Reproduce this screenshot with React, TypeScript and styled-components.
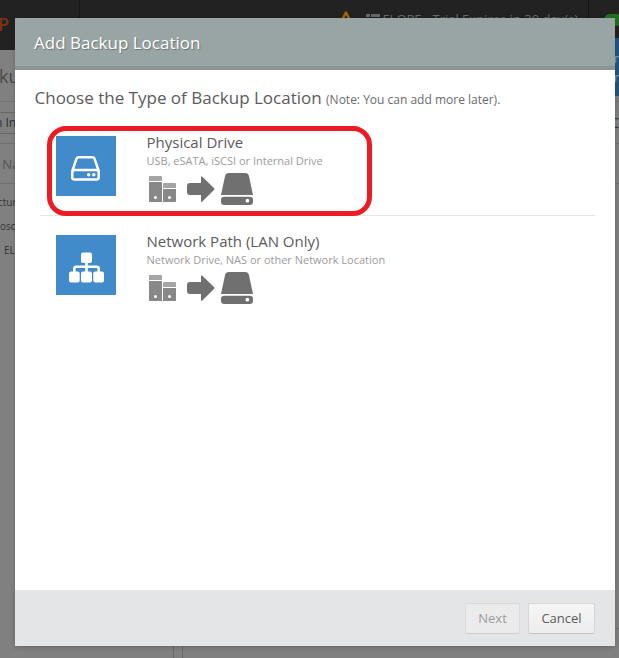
import React from 'react';
import styled, { createGlobalStyle } from 'styled-components';

const GlobalStyle = createGlobalStyle`
  * { box-sizing: border-box; }
  body { margin: 0; overflow: hidden; background: #808080; font-family: "Open Sans", sans-serif; color: #555; }
`;

const Screen = styled.div`
  position: relative;
  width: 619px;
  height: 658px;
  overflow: hidden;
  display: flex;
  flex-direction: column;
  background: #808080;
  white-space: nowrap;
`;

const TopBar = styled.header`
  display: grid;
  grid-template-columns: 80px 509px 30px;
  height: 50px;
  flex: none;
  background: #222;
`;
const BarCell = styled.div<{ $justify?: string }>`
  display: flex;
  justify-content: ${p => p.$justify ?? 'flex-start'};
  border-right: 1px solid #151515;
  overflow: hidden;
`;
const Brand = styled.span`
  margin-left: -2px;
  padding-top: 12px;
  font-size: 18px;
  font-weight: 600;
  line-height: 24px;
  color: #80310f;
`;
const Trial = styled.span`
  display: flex;
  align-items: flex-start;
  padding: 11px 10px 0 0;
  font-size: 13px;
  line-height: 17px;
  color: #686868;
  svg { flex: none; }
`;
const TrialText = styled.span`
  margin-left: 2px;
`;
const Status = styled.span`
  width: 18px;
  height: 12px;
  margin: 14px 0 0 15px;
  border-radius: 6px;
  background: #237023;
`;

const PageRow = styled.div<{ $h: number; $line?: string }>`
  display: flex;
  justify-content: space-between;
  align-items: center;
  height: ${p => p.$h}px;
  flex: none;
  border-bottom: 1px solid ${p => p.$line ?? 'transparent'};
`;
const PageText = styled.span<{ $size: number; $indent?: number; $color?: string; $weight?: number }>`
  margin-left: ${p => p.$indent ?? 0}px;
  font-size: ${p => p.$size}px;
  font-weight: ${p => p.$weight ?? 400};
  color: ${p => p.$color ?? '#333'};
`;
const ToolButton = styled.div`
  display: flex;
  align-items: center;
  width: 60px;
  height: 22px;
  border: 1px solid #686868;
  border-left: 0;
`;
const Promo = styled.div`
  align-self: flex-start;
  width: 5px;
  height: 58px;
  margin-top: -12px;
  padding-top: 11px;
  overflow: hidden;
  background: #215580;
  color: #909da8;
  font-size: 12px;
  line-height: 19px;
`;
const Panes = styled.div`
  display: grid;
  grid-template-columns: 174px 9px 1fr;
  flex: 1;
`;
const Pane = styled.div`
  border-right: 1px solid #666;
`;
const DetailPane = styled.div`
  height: 361px;
  border-bottom: 1px solid #707070;
`;

const Dialog = styled.section`
  position: absolute;
  left: 15px;
  top: 18px;
  width: 600px;
  height: 628px;
  display: flex;
  flex-direction: column;
  background: #fff;
  border-radius: 1px;
  box-shadow: 0 1px 5px rgba(0, 0, 0, 0.2);
`;
const DialogHeader = styled.header`
  height: 52px;
  padding: 0 19px;
  background: #99a5a4;
  border-bottom: 4px solid #8a9695;
  color: #fff;
  font-size: 17px;
  line-height: 49px;
  text-shadow: 1px 1px 1px rgba(0, 0, 0, 0.3);
`;
const DialogBody = styled.div`
  flex: 1;
  padding: 16px 20px 0;
`;
const Heading = styled.h1`
  height: 31px;
  margin: 0 0 0 -0.5px;
  font-size: 17px;
  font-weight: 400;
  line-height: 24px;
  color: #5b5b5b;
`;
const Note = styled.small`
  font-size: 12px;
  color: #6b6b6b;
`;
const OptionList = styled.div`
  margin-left: 5px;
`;
const Option = styled.div`
  position: relative;
  display: grid;
  grid-template-columns: 60px 1fr;
  column-gap: 30.5px;
  height: 99px;
  padding: 19px 0 0 16px;
  &:not(:last-child) { border-bottom: 1px solid #e5e5e5; }
`;
const Tile = styled.div`
  display: grid;
  place-items: center;
  width: 60px;
  height: 60px;
  padding-top: 3px;
  background: #428bca;
`;
const OptionTitle = styled.div`
  margin-top: -5px;
  font-size: 15px;
  line-height: 22px;
  color: #5b5b5b;
`;
const OptionHint = styled.div`
  font-size: 11px;
  line-height: 16px;
  color: #9c9c9c;
`;
const Highlight = styled.div`
  position: absolute;
  left: 7px;
  top: 9px;
  width: 325px;
  height: 90px;
  border: 5px solid #ed1c24;
  border-radius: 19px;
`;
const FlowDrawing = styled.svg`
  display: block;
  margin: 2px 0 0 1.5px;
`;
const DialogFooter = styled.footer`
  display: flex;
  justify-content: flex-end;
  gap: 8px;
  height: 56px;
  padding: 13px 20px 0;
  background: #e4e5e7;
`;
const Button = styled.button<{ $width: number }>`
  width: ${p => p.$width}px;
  height: 31px;
  padding: 0;
  border: 1px solid #d5d5d6;
  border-bottom-color: #c5c5c5;
  border-radius: 2px;
  background: linear-gradient(#f5f5f5, #ededed);
  color: #5a5a5a;
  font: 13px/27px "Open Sans", sans-serif;
  &:disabled { color: #9c9c9c; background: #ebebec; border-color: #d9dadb; border-bottom-color: #cecfd0; }
`;

const WarningIcon = () => (
  <svg width="14" height="14" viewBox="0 0 14 14">
    <path d="M7 1.5 13 13H1Z" fill="none" stroke="#a2650c" strokeWidth="2.4" strokeLinejoin="round" />
  </svg>
);
const ListIcon = () => (
  <svg width="14" height="12" viewBox="0 0 14 12">
    <path d="M0 3h4v3H0zM5 3h9v3H5zM0 7h4v3H0zM5 7h9v3H5z" fill="#686868" />
  </svg>
);
const ListGap = styled.span`
  width: 13px;
`;

const DriveIcon = () => (
  <svg width="32" height="28" viewBox="0 0 32 28" fill="none" stroke="#fff" strokeWidth="2.5">
    <path d="M2.3 17 6.5 4.6Q7.1 3.2 8.6 3.2H22.4Q23.9 3.2 24.5 4.6L28.7 17V23.2Q28.7 25.5 26.4 25.5H4.6Q2.3 25.5 2.3 23.2V18.7Q2.3 16 5 16H26Q28.7 16 28.7 18.7" />
    <circle cx="18.7" cy="20.8" r="1.7" fill="#fff" stroke="none" />
    <circle cx="23.8" cy="20.8" r="1.7" fill="#fff" stroke="none" />
  </svg>
);
const NetworkIcon = () => (
  <svg width="36" height="32" viewBox="0 0 36 32" fill="#fff">
    <rect x="13" y="1.5" width="11" height="10.5" rx="2" />
    <rect x="1" y="20.5" width="10.7" height="11" rx="2" />
    <rect x="13" y="20.5" width="11" height="11" rx="2" />
    <rect x="25.3" y="20.5" width="10.7" height="11" rx="2" />
    <path d="M18.5 10v11M6.3 21v-3.2q0-2 2-2h20.4q2 0 2 2V21" fill="none" stroke="#fff" strokeWidth="2.6" />
  </svg>
);
const TransferDrawing = () => (
  <FlowDrawing width="107" height="36" viewBox="0 0 107 36">
    <path d="M1 5.5q0-.5.5-.5H13q1 0 1 1v4H1zM15 12.7q0-.7.7-.7H27q1 0 1 1v4H15z" fill="#a5a5a5" />
    <path d="M1 11h13v20H1.8q-.8 0-.8-.8zM15 18h13v12.2q0 .8-.8.8H15z" fill="#888" />
    <circle cx="7.5" cy="26.5" r="1.5" fill="#fff" />
    <circle cx="21.5" cy="26.5" r="1.5" fill="#fff" />
    <path d="M42 12h11V6.2q0-1.7 1.3-.5L66 17q1 1 0 2L54.3 30.5Q53 31.7 53 30v-6H42q-3 0-3-3v-6q0-3 3-3Z" fill="#707070" />
    <path d="M81 2h16q3.3 0 4 3.2L105 24H73L77 5.2Q77.7 2 81 2Z" fill="#707070" />
    <rect x="73" y="25.7" width="32" height="8.3" rx="3.3" fill="#707070" />
    <circle cx="99.4" cy="29.7" r="1.9" fill="#fff" />
  </FlowDrawing>
);

const options = [
  { title: 'Physical Drive', hint: 'USB, eSATA, iSCSI or Internal Drive', Icon: DriveIcon, marked: true },
  { title: 'Network Path (LAN Only)', hint: 'Network Drive, NAS or other Network Location', Icon: NetworkIcon, marked: false },
];

export default function App() {
  return (
    <>
      <GlobalStyle />
      <Screen>
        <TopBar>
          <BarCell><Brand>P</Brand></BarCell>
          <BarCell $justify="flex-end">
            <Trial>
              <WarningIcon /><ListGap /><ListIcon />
              <TrialText>ELOPE - Trial Expires in 30 day(s)</TrialText>
            </Trial>
          </BarCell>
          <Status />
        </TopBar>
        <PageRow $h={52} $line="#737373">
          <PageText $size={18} $indent={-1} $color="#484848">ku</PageText>
          <Promo>m<br />na</Promo>
        </PageRow>
        <PageRow $h={42} $line="#707070">
          <ToolButton><PageText $size={12} $indent={-5} $color="#292f43">n In</PageText></ToolButton>
          <PageText $size={14}>C</PageText>
        </PageRow>
        <PageRow $h={40} $line="#707070">
          <PageText $size={13} $indent={2} $color="#5f5f5f" $weight={600}>Na</PageText>
        </PageRow>
        <PageRow $h={36}><PageText $size={10} $indent={-2}>ctur</PageText></PageRow>
        <PageRow $h={12}><PageText $size={10}>osc</PageText></PageRow>
        <PageRow $h={36}><PageText $size={10} $indent={4}>EL</PageText></PageRow>
        <Panes><Pane /><Pane /><DetailPane /></Panes>
        <Dialog>
          <DialogHeader>Add Backup Location</DialogHeader>
          <DialogBody>
            <Heading>Choose the Type of Backup Location <Note>(Note: You can add more later).</Note></Heading>
            <OptionList>
              {options.map(({ title, hint, Icon, marked }) => (
                <Option key={title}>
                  <Tile><Icon /></Tile>
                  <div>
                    <OptionTitle>{title}</OptionTitle>
                    <OptionHint>{hint}</OptionHint>
                    <TransferDrawing />
                  </div>
                  {marked && <Highlight />}
                </Option>
              ))}
            </OptionList>
          </DialogBody>
          <DialogFooter>
            <Button $width={55} disabled>Next</Button>
            <Button $width={67}>Cancel</Button>
          </DialogFooter>
        </Dialog>
      </Screen>
    </>
  );
}
